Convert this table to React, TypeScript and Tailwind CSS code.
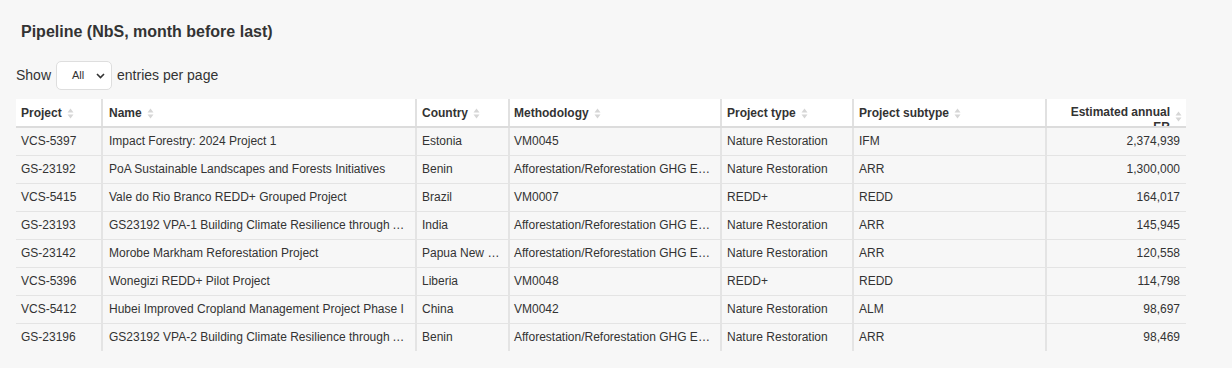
import React from "react";

type Row = {
  project: string;
  name: string;
  country: string;
  methodology: string;
  type: string;
  subtype: string;
  er: string;
};

const rows: Row[] = [
  { project: "VCS-5397", name: "Impact Forestry: 2024 Project 1", country: "Estonia", methodology: "VM0045", type: "Nature Restoration", subtype: "IFM", er: "2,374,939" },
  { project: "GS-23192", name: "PoA Sustainable Landscapes and Forests Initiatives", country: "Benin", methodology: "Afforestation/Reforestation GHG Emissions Reduction & Sequestration Methodology", type: "Nature Restoration", subtype: "ARR", er: "1,300,000" },
  { project: "VCS-5415", name: "Vale do Rio Branco REDD+ Grouped Project", country: "Brazil", methodology: "VM0007", type: "REDD+", subtype: "REDD", er: "164,017" },
  { project: "GS-23193", name: "GS23192 VPA-1 Building Climate Resilience through Agroforestry", country: "India", methodology: "Afforestation/Reforestation GHG Emissions Reduction & Sequestration Methodology", type: "Nature Restoration", subtype: "ARR", er: "145,945" },
  { project: "GS-23142", name: "Morobe Markham Reforestation Project", country: "Papua New Guinea", methodology: "Afforestation/Reforestation GHG Emissions Reduction & Sequestration Methodology", type: "Nature Restoration", subtype: "ARR", er: "120,558" },
  { project: "VCS-5396", name: "Wonegizi REDD+ Pilot Project", country: "Liberia", methodology: "VM0048", type: "REDD+", subtype: "REDD", er: "114,798" },
  { project: "VCS-5412", name: "Hubei Improved Cropland Management Project Phase I", country: "China", methodology: "VM0042", type: "Nature Restoration", subtype: "ALM", er: "98,697" },
  { project: "GS-23196", name: "GS23192 VPA-2 Building Climate Resilience through Agroforestry", country: "Benin", methodology: "Afforestation/Reforestation GHG Emissions Reduction & Sequestration Methodology", type: "Nature Restoration", subtype: "ARR", er: "98,469" },
];

const SortIcon = () => (
  <svg width="7" height="11" viewBox="0 0 7 11" className="inline-block shrink-0 ml-[5px]">
    <path d="M3.5 0.5 L6.5 4.5 L0.5 4.5 Z" fill="#d6d6d6" />
    <path d="M3.5 10.5 L6.5 6.5 L0.5 6.5 Z" fill="#d6d6d6" />
  </svg>
);

const headers = [
  { label: "Project", w: "w-[86px]", pl: "pl-[5px]" },
  { label: "Name", w: "w-[314px]", pl: "pl-[6px]" },
  { label: "Country", w: "w-[93px]", pl: "pl-[5px]" },
  { label: "Methodology", w: "w-[212px]", pl: "pl-[4px]" },
  { label: "Project type", w: "w-[132px]", pl: "pl-[5px]" },
  { label: "Project subtype", w: "w-[193px]", pl: "pl-[5px]" },
];

export default function App() {
  const cell = "h-[28px] border-b border-[#e4e4e4] truncate align-middle";
  const vline = "border-l-2 border-[#e1e1e1]";

  return (
    <div className="min-h-[368px] w-[1232px] bg-[#f7f7f7] text-[#333] font-['Liberation_Sans',Arial,sans-serif]">
      <div className="px-4 pt-[22px]">
        <h2 className="pl-[5px] text-[16px] font-bold leading-[20px] text-[#333]">
          Pipeline (NbS, month before last)
        </h2>

        <div className="mt-[19px] flex items-center text-[14px]">
          <span>Show</span>
          <div className="mx-[5px] flex h-[29px] w-[56px] items-center justify-between rounded-[5px] border border-[#dedede] bg-white pl-[15px] pr-[6px]">
            <span className="text-[11px]">All</span>
            <svg width="9" height="6" viewBox="0 0 9 6">
              <path d="M1 1 L4.5 4.5 L8 1" stroke="#333" strokeWidth="1.6" fill="none" />
            </svg>
          </div>
          <span>entries per page</span>
        </div>

        <table className="mt-[9px] w-[1170px] table-fixed border-collapse text-[12px]">
          <thead>
            <tr className="bg-white">
              {headers.map((h, i) => (
                <th
                  key={h.label}
                  className={`${h.w} ${h.pl} ${i > 0 ? vline : ""} h-[28px] border-b-2 border-b-[#dcdcdc] pt-[1px] text-left align-middle font-bold`}
                >
                  <div className="flex items-center">
                    <span>{h.label}</span>
                    <SortIcon />
                  </div>
                </th>
              ))}
              <th className={`${vline} h-[28px] border-b-2 border-b-[#dcdcdc] p-0 pr-[4px] font-bold`}>
                <div className="flex h-[27px] items-start justify-end overflow-hidden pt-[6px]">
                  <span className="w-[110px] text-right leading-[15px]">Estimated annual ER</span>
                  <span className="mt-[2px]">
                    <SortIcon />
                  </span>
                </div>
              </th>
            </tr>
          </thead>
          <tbody>
            {rows.map((r, idx) => {
              const last = idx === rows.length - 1 ? "border-b-0" : "";
              return (
                <tr key={r.project}>
                  <td className={`${cell} ${last} pl-[5px]`}>{r.project}</td>
                  <td className={`${cell} ${last} ${vline} pl-[6px] pr-[4px]`}>{r.name}</td>
                  <td className={`${cell} ${last} ${vline} pl-[5px] pr-[4px]`}>{r.country}</td>
                  <td className={`${cell} ${last} ${vline} pl-[4px] pr-[6px]`}>{r.methodology}</td>
                  <td className={`${cell} ${last} ${vline} pl-[5px] pr-[4px]`}>{r.type}</td>
                  <td className={`${cell} ${last} ${vline} pl-[5px] pr-[4px]`}>{r.subtype}</td>
                  <td className={`${cell} ${last} ${vline} pr-[6px] text-right`}>{r.er}</td>
                </tr>
              );
            })}
          </tbody>
        </table>
      </div>
    </div>
  );
}
